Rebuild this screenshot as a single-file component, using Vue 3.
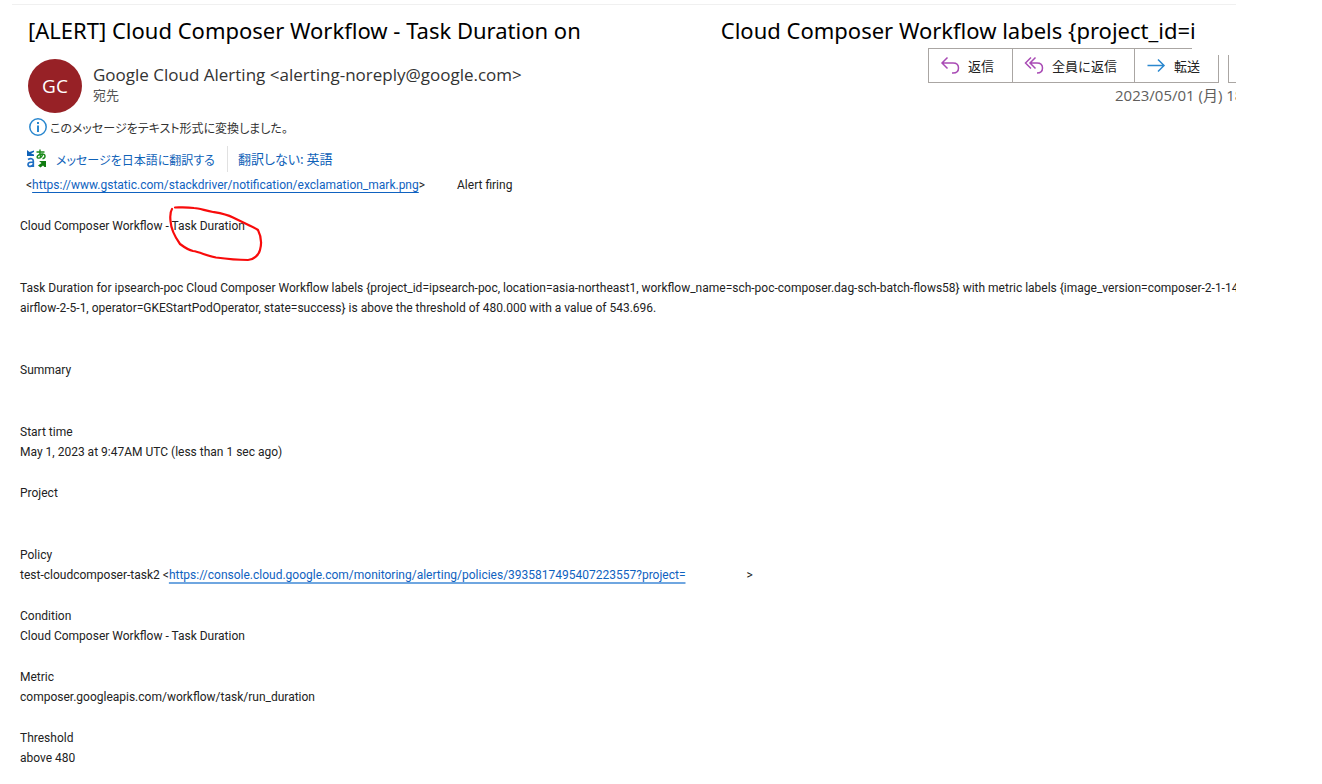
<script setup>
const imageUrl = 'https://www.gstatic.com/stackdriver/notification/exclamation_mark.png'
const policyUrl = 'https://console.cloud.google.com/monitoring/alerting/policies/3935817495407223557?project='
</script>

<template>
  <main class="message">
    <h1 class="subject">
      <span>[ALERT] Cloud Composer Workflow - Task Duration on</span>
      <span>Cloud Composer Workflow labels {project_id=i</span>
    </h1>

    <header class="head">
      <div class="avatar">GC</div>
      <div class="sender">
        <div class="from">Google Cloud Alerting &lt;alerting-noreply@google.com&gt;</div>
        <div class="to">宛先</div>
      </div>
      <div class="side">
        <div class="toolbar">
          <button type="button" class="reply">
            <svg width="20" height="20" viewBox="0 0 20 20" fill="none" stroke="#a94bb5" stroke-width="1.5">
              <path d="M7.5 1.5 L2 7 L7.5 12.5 M2 7 H13 C16.5 7 18.5 9 18.5 12 S16.5 17 13 17 H12" />
            </svg>
            <span>返信</span>
          </button>
          <button type="button" class="reply-all">
            <svg width="20" height="20" viewBox="0 0 20 20" fill="none" stroke="#a94bb5" stroke-width="1.5">
              <path d="M7 1.5 L1.5 7 L7 12.5 M11.5 1.5 L6 7 L11.5 12.5 M6 7 H13 C16.5 7 18.5 9 18.5 12 S16.5 17 13 17" />
            </svg>
            <span>全員に返信</span>
          </button>
          <button type="button" class="forward">
            <svg width="20" height="20" viewBox="0 0 20 20" fill="none" stroke="#2b88cf" stroke-width="1.5">
              <path d="M1.5 9.5 H17.5 M12 3.5 L18 9.5 L12 15.5" />
            </svg>
            <span>転送</span>
          </button>
          <button type="button" class="more" aria-label="その他"></button>
        </div>
        <time class="date">2023/05/01 (月) 18:47</time>
      </div>
    </header>

    <div class="info">
      <svg width="20" height="20" viewBox="0 0 20 20">
        <circle cx="10" cy="10" r="8.2" fill="none" stroke="#2b88cf" stroke-width="1.5" />
        <path d="M9 5h2v2H9z M9 8.5h2V15H9z" fill="#2b88cf" />
      </svg>
      <span>このメッセージをテキスト形式に変換しました。</span>
    </div>

    <nav class="translate">
      <svg width="20" height="20" viewBox="0 0 20 20">
        <path d="M0 1 L2.500 3 L7 1.500 V3 L4 4.500 L7 5.500 V7 H0 Z" fill="#0f62b8" />
        <path d="M1 10.500 C3.500 9 6.300 9.500 6.300 12 V18 M6.300 13 C3 13 1 13.600 1 15.500 C1 18.200 5 18 6.300 15.500" fill="none" stroke="#1f6fc4" stroke-width="1.700" />
        <path d="M9.500 3 H17.500 M13 0.500 C12.700 4 12.800 6.500 13.700 8.800 M16 4.500 C15 8 13 9.400 11 9 C8.800 8.300 11 5 15 5 C18.900 5 19 8.800 15.500 9.700" fill="none" stroke="#1a8a1a" stroke-width="1.400" />
        <path d="M19 11.500 V18 H17.500 L16 16.500 L13.500 18.500 L11 16.500 L14.500 14 L12 12 H19 Z" fill="#107c10" />
      </svg>
      <a href="#translate">メッセージを日本語に翻訳する</a>
      <a href="#never" class="never">翻訳しない: 英語</a>
    </nav>

    <article class="body">
      <p class="firing">
        <span>&lt;<a class="strong" :href="imageUrl">{{ imageUrl }}</a>&gt;</span>
        <span>Alert firing</span>
      </p>
      <p>
        Cloud Composer Workflow -
        <span class="marked">Task Duration<svg class="scribble" width="96" height="60" viewBox="0 0 96 60" fill="none" stroke="#f80b0b" stroke-width="2.2" stroke-linecap="round" stroke-linejoin="round">
          <path d="M4 5 C2 8 2 12 2.500 17 C3 25 7 33 12 40 C16 43 20 46 25 47 C32 48 39 52 48 53.500 C59 55 71 56 80 56 C85 56 91 51 92 46 C94 39 93 32 90 26 C86 23 78 20 65 13.500 C58 10 51 9 45 8 C38 7 31 4 26 4 C18 3 12 3.500 7 3.500" />
        </svg></span>
      </p>
      <p class="wide">
        Task Duration for ipsearch-poc Cloud Composer Workflow labels {project_id=ipsearch-poc, location=asia-northeast1, workflow_name=sch-poc-composer.dag-sch-batch-flows58} with metric labels {image_version=composer-2-1-14-<br>
        airflow-2-5-1, operator=GKEStartPodOperator, state=success} is above the threshold of 480.000 with a value of 543.696.
      </p>
      <p class="wide">Summary</p>
      <p class="wide">Start time<br>May 1, 2023 at 9:47AM UTC (less than 1 sec ago)</p>
      <p>Project</p>
      <p class="wide">
        Policy<br>
        <span class="row">
          <span>test-cloudcomposer-task2 &lt;<a class="soft" :href="policyUrl">{{ policyUrl }}</a></span>
          <span>&gt;</span>
        </span>
      </p>
      <p>Condition<br>Cloud Composer Workflow - Task Duration</p>
      <p>Metric<br>composer.googleapis.com/workflow/task/run_duration</p>
      <p>Threshold<br>above 480</p>
    </article>
  </main>
</template>

<style>
body {
  margin: 0;
  background: #fff;
}
</style>

<style scoped>
.message {
  margin: 4px 86px 0 12px;
  border-top: 1px solid #f0f0f0;
  overflow: hidden;
  color: #333;
  font-family: "Noto Sans", "Noto Sans CJK JP", sans-serif;
}
.subject {
  display: flex;
  gap: 140px;
  margin: 9px 0 2px 16px;
  font-size: 22px;
  line-height: 32px;
  font-weight: 400;
  color: #000;
  white-space: nowrap;
}
.head {
  display: flex;
  height: 66px;
  margin-left: 16px;
}
.avatar {
  flex: none;
  width: 54px;
  height: 54px;
  margin-top: 11px;
  border-radius: 50%;
  background: #972126;
  color: #fff;
  font-family: "Open Sans", sans-serif;
  font-size: 19px;
  line-height: 55px;
  text-align: center;
}
.sender {
  flex: 1;
  margin: 15px 0 0 11px;
  white-space: nowrap;
}
.from {
  font-family: "Open Sans", sans-serif;
  font-size: 17px;
  line-height: 23px;
}
.to {
  font-size: 13px;
  line-height: 18px;
  color: #555;
}
.side {
  flex: none;
  width: 308px;
  white-space: nowrap;
}
.toolbar {
  position: relative;
  display: flex;
  height: 35px;
}
/* blank patch over the top-right corner of the toolbar */
.toolbar::after {
  content: "";
  position: absolute;
  top: 0;
  right: 0;
  width: 44px;
  height: 7px;
  background: #fff;
}
button {
  flex: none;
  display: flex;
  align-items: center;
  gap: 8px;
  box-sizing: border-box;
  padding: 0 0 0 11px;
  border: 1px solid #aaa6a3;
  border-right: 0;
  background: #fff;
  color: #222;
  font: 13px "Noto Sans CJK JP", sans-serif;
}
.reply,
.forward {
  width: 84px;
}
.reply-all {
  width: 122px;
}
.forward {
  width: 85px;
  border-right: 1px solid #aaa6a3;
}
.more {
  width: 36px;
  margin-left: 9px;
}
.date {
  display: block;
  margin-left: 187px;
  font-size: 15px;
  font-family: "Open Sans", "Noto Sans CJK JP", sans-serif;
  line-height: 24px;
  color: #605e5c;
}
.info {
  display: flex;
  align-items: center;
  gap: 2px;
  height: 22px;
  margin: 2px 0 0 16px;
  font: 12px "Noto Sans CJK JP", sans-serif;
  font-feature-settings: "palt";
}
.translate {
  display: flex;
  align-items: center;
  height: 26px;
  margin: 8px 0 0 15px;
  font: 12px "Noto Sans CJK JP", sans-serif;
  font-feature-settings: "palt";
}
.translate a {
  margin-left: 9px;
  color: #0f62b8;
  text-decoration: none;
}
.translate .never {
  margin-left: 12px;
  padding-left: 10px;
  border-left: 1px solid #e1e1e1;
  font-size: 13px;
  line-height: 26px;
}
.body {
  margin-left: 8px;
  padding-top: 3px;
  color: #222;
  font-family: Roboto, sans-serif;
  font-size: 12px;
  line-height: 20px;
  white-space: nowrap;
}
p {
  margin: 21px 0 0;
}
p.wide {
  margin-top: 42px;
}
p.firing {
  display: flex;
  gap: 32px;
  margin: 0 0 0 6px;
}
.body a {
  color: #0f62c0;
  text-decoration: underline;
  text-underline-offset: 3px;
}
.body a.soft {
  text-decoration-color: #6fa6e0;
  text-decoration-thickness: 2px;
}
.row {
  display: flex;
  gap: 61px;
}
.marked {
  position: relative;
}
.scribble {
  position: absolute;
  left: -3px;
  top: -15px;
}
</style>
